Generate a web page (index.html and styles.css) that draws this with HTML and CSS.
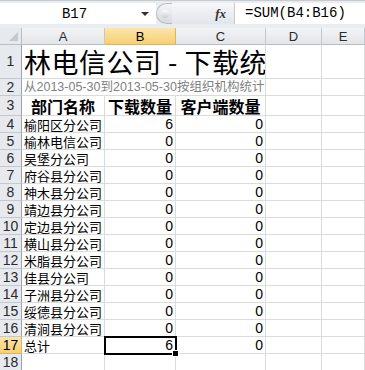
FILE: index.html
```html
<!DOCTYPE html>
<html lang="zh-CN">
  <head>
    <meta charset="UTF-8" />
    <title>下载统计</title>
    <link rel="stylesheet" href="styles.css">
  </head>
  <body>
    <div class="formula-bar">
      <div class="name-box">
        <span class="name">B17</span>
        <span class="drop"></span>
      </div>
      <div class="knob"></div>
      <div class="fx">fx</div>
      <div class="formula">=SUM(B4:B16)</div>
    </div>

    <div class="sheet">
      <div class="corner"></div>
      <div class="col-head">A</div>
      <div class="col-head active">B</div>
      <div class="col-head">C</div>
      <div class="col-head">D</div>
      <div class="col-head">E</div>

      <div class="row-head">1</div>
      <div class="cell merged title">林电信公司 - 下载统</div>
      <div class="cell"></div>
      <div class="cell"></div>

      <div class="row-head">2</div>
      <div class="cell merged sub">从2013-05-30到2013-05-30按组织机构统计</div>
      <div class="cell"></div>
      <div class="cell"></div>

      <div class="row-head">3</div>
      <div class="cell th">部门名称</div>
      <div class="cell th">下载数量</div>
      <div class="cell th">客户端数量</div>
      <div class="cell"></div>
      <div class="cell"></div>

      <div class="row-head">4</div>
      <div class="cell">榆阳区分公司</div>
      <div class="cell num">6</div>
      <div class="cell num">0</div>
      <div class="cell"></div>
      <div class="cell"></div>

      <div class="row-head">5</div>
      <div class="cell">榆林电信公司</div>
      <div class="cell num">0</div>
      <div class="cell num">0</div>
      <div class="cell"></div>
      <div class="cell"></div>

      <div class="row-head">6</div>
      <div class="cell">吴堡分公司</div>
      <div class="cell num">0</div>
      <div class="cell num">0</div>
      <div class="cell"></div>
      <div class="cell"></div>

      <div class="row-head">7</div>
      <div class="cell">府谷县分公司</div>
      <div class="cell num">0</div>
      <div class="cell num">0</div>
      <div class="cell"></div>
      <div class="cell"></div>

      <div class="row-head">8</div>
      <div class="cell">神木县分公司</div>
      <div class="cell num">0</div>
      <div class="cell num">0</div>
      <div class="cell"></div>
      <div class="cell"></div>

      <div class="row-head">9</div>
      <div class="cell">靖边县分公司</div>
      <div class="cell num">0</div>
      <div class="cell num">0</div>
      <div class="cell"></div>
      <div class="cell"></div>

      <div class="row-head">10</div>
      <div class="cell">定边县分公司</div>
      <div class="cell num">0</div>
      <div class="cell num">0</div>
      <div class="cell"></div>
      <div class="cell"></div>

      <div class="row-head">11</div>
      <div class="cell">横山县分公司</div>
      <div class="cell num">0</div>
      <div class="cell num">0</div>
      <div class="cell"></div>
      <div class="cell"></div>

      <div class="row-head">12</div>
      <div class="cell">米脂县分公司</div>
      <div class="cell num">0</div>
      <div class="cell num">0</div>
      <div class="cell"></div>
      <div class="cell"></div>

      <div class="row-head">13</div>
      <div class="cell">佳县分公司</div>
      <div class="cell num">0</div>
      <div class="cell num">0</div>
      <div class="cell"></div>
      <div class="cell"></div>

      <div class="row-head">14</div>
      <div class="cell">子洲县分公司</div>
      <div class="cell num">0</div>
      <div class="cell num">0</div>
      <div class="cell"></div>
      <div class="cell"></div>

      <div class="row-head">15</div>
      <div class="cell">绥德县分公司</div>
      <div class="cell num">0</div>
      <div class="cell num">0</div>
      <div class="cell"></div>
      <div class="cell"></div>

      <div class="row-head">16</div>
      <div class="cell">清涧县分公司</div>
      <div class="cell num">0</div>
      <div class="cell num">0</div>
      <div class="cell"></div>
      <div class="cell"></div>

      <div class="row-head active">17</div>
      <div class="cell">总计</div>
      <div class="cell num selected">6</div>
      <div class="cell num">0</div>
      <div class="cell"></div>
      <div class="cell"></div>

      <div class="row-head">18</div>
      <div class="cell"></div>
      <div class="cell"></div>
      <div class="cell"></div>
      <div class="cell"></div>
      <div class="cell"></div>
    </div>
  </body>
</html>
```

FILE: styles.css
```css
* {
  box-sizing: border-box;
}

body {
  margin: 0;
  width: 365px;
  height: 370px;
  overflow: hidden;
  background: #ffffff;
  font-family: "Liberation Sans", "Noto Sans CJK SC", sans-serif;
  color: #000;
}

/* formula bar */
.formula-bar {
  display: flex;
  height: 28px;
  padding: 2px 0 4px;
  background: #e9ecf0;
  border-top: 1px solid #c6cbd1;
}

.name-box {
  width: 156px;
  background: #fff;
  display: flex;
  align-items: center;
}

.name {
  flex: 1;
  text-align: center;
  font-family: "Liberation Mono", monospace;
  font-size: 14px;
  padding-left: 8px;
}

.drop {
  width: 0;
  height: 0;
  border-left: 4px solid transparent;
  border-right: 4px solid transparent;
  border-top: 4px solid #333;
  margin-right: 7px;
}

.knob {
  width: 16px;
  background: linear-gradient(#f4f5f7, #d7dbe0);
  border: 1px solid #b7bcc3;
  border-radius: 11px 0 0 11px;
  border-right: none;
  position: relative;
}

.knob::after {
  content: "";
  position: absolute;
  left: 4px;
  top: 6px;
  width: 8px;
  height: 8px;
  border-radius: 50%;
  background: linear-gradient(#fdfdfd, #c9ced4);
}

.fx {
  width: 62px;
  text-align: right;
  padding-right: 8px;
  font-family: "Liberation Serif", serif;
  font-style: italic;
  font-weight: bold;
  font-size: 13px;
  line-height: 21px;
  color: #333;
  background: linear-gradient(#f6f7f9, #e2e5ea);
}

.formula {
  flex: 1;
  background: #fff;
  border-left: 1px solid #c6cbd1;
  padding-left: 10px;
  font-family: "Liberation Mono", monospace;
  font-size: 14px;
  line-height: 21px;
}

/* sheet grid */
.sheet {
  display: grid;
  grid-template-columns: 22px 83px 71px 90px 56px 43px;
  grid-template-rows: 17px 34px 17px 20px repeat(15, 17px);
}

.corner {
  background: #e6e9ed;
  border-right: 1px solid #b9bec5;
  border-bottom: 1px solid #b9bec5;
  position: relative;
}

.corner::after {
  content: "";
  position: absolute;
  right: 3px;
  bottom: 3px;
  border-left: 9px solid transparent;
  border-bottom: 9px solid #c4c9cf;
}

.col-head,
.row-head {
  background: linear-gradient(#f3f4f6, #e2e5e9);
  border-right: 1px solid #c4c9cf;
  border-bottom: 1px solid #b9bec5;
  font-size: 13px;
  line-height: 15px;
  color: #2b2b2b;
  display: flex;
  align-items: center;
  justify-content: center;
}

.row-head {
  font-size: 14px;
  background: #e6e9ed;
  border-bottom-color: #c4c9cf;
  border-right-color: #9ea4ab;
}

.col-head.active,
.row-head.active {
  background: linear-gradient(#fbe6b0, #f6cf6f);
  border-color: #e5b34f;
  color: #000;
}

.cell {
  border-right: 1px solid #d9dbdd;
  border-bottom: 1px solid #d9dbdd;
  font-family: "Noto Sans CJK SC", sans-serif;
  font-size: 13px;
  line-height: 15px;
  padding: 0 2px;
  white-space: nowrap;
  display: flex;
  align-items: flex-end;
}

.cell.merged {
  grid-column: span 3;
  overflow: hidden;
}

.title {
  font-size: 27px;
  line-height: 32px;
  letter-spacing: 0.5px;
}

.sub {
  font-family: "Liberation Sans", "Noto Sans CJK SC", sans-serif;
  font-size: 12.5px;
  color: #7f7f7f;
}

.th {
  font-weight: bold;
  font-size: 16px;
  line-height: 18px;
  justify-content: center;
  padding: 0;
}

.num {
  justify-content: flex-end;
  font-family: "Liberation Sans", sans-serif;
  font-size: 14px;
}

.selected {
  position: relative;
  outline: 2px solid #000;
  outline-offset: -1px;
}

.selected::after {
  content: "";
  position: absolute;
  right: -4px;
  bottom: -4px;
  width: 5px;
  height: 5px;
  background: #000;
  border: 1px solid #fff;
}
```
